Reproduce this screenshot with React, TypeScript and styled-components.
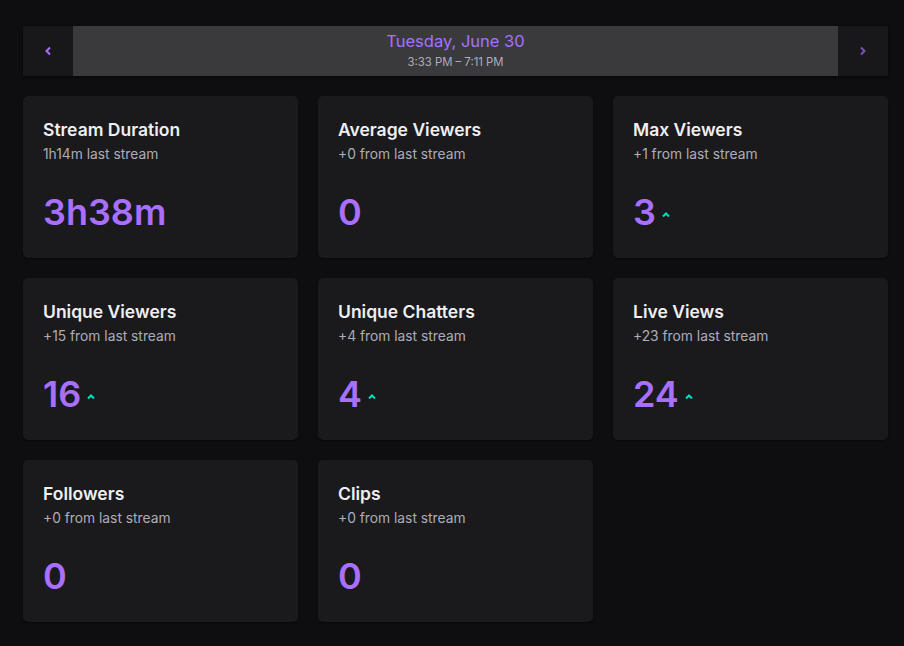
import styled, { createGlobalStyle } from 'styled-components'

const Global = createGlobalStyle`
  body {
    margin: 0;
    background: #0e0e10;
    font-family: Inter, "Noto Sans", sans-serif;
  }
`

const Page = styled.div`
  padding: 26px 16px 24px 23px;
  display: flex;
  flex-direction: column;
  gap: 20px;
`

const DateBar = styled.div`
  display: flex;
  height: 50px;
  width: 865px;
  box-shadow: 0 1px 3px rgba(0, 0, 0, 0.6);
`

const NavButton = styled.button<{ $dim?: boolean }>`
  width: 50px;
  border: none;
  background: #18181b;
  color: ${p => (p.$dim ? '#7a52bf' : '#a970ff')};
  display: flex;
  align-items: center;
  justify-content: center;
  padding: 0;
  cursor: pointer;
`

const DateCenter = styled.div`
  flex: 1;
  background: #3a3a3d;
  display: flex;
  flex-direction: column;
  align-items: center;
  justify-content: center;
  padding-bottom: 1px;
`

const DateTitle = styled.div`
  color: #a970ff;
  font-size: 16.5px;
  line-height: 20px;
`

const DateRange = styled.div`
  color: #adadb8;
  font-size: 11.3px;
  line-height: 16px;
  margin-top: 3px;
`

const Grid = styled.div`
  display: grid;
  grid-template-columns: repeat(3, 275px);
  grid-auto-rows: 162px;
  gap: 20px;
`

const Card = styled.div`
  background: #1a1a1d;
  border-radius: 5px;
  padding: 20px;
  box-sizing: border-box;
  box-shadow: 0 1px 2px rgba(0, 0, 0, 0.5);
`

const Title = styled.div`
  color: #efeff1;
  font-size: 17.5px;
  font-weight: 600;
  line-height: 24px;
  margin-top: 2px;
`

const Sub = styled.div`
  color: #adadb8;
  font-size: 13.8px;
  line-height: 20px;
  margin-top: 2px;
`

const ValueRow = styled.div`
  display: flex;
  align-items: center;
  gap: 6px;
  margin-top: 26px;
`

const Value = styled.div`
  color: #a970ff;
  font-size: 36px;
  font-weight: 600;
  line-height: 44px;
`

const Up = styled.svg`
  color: #00e0c0;
  margin-top: 4px;
`

const Chevron = ({ dir }: { dir: 'left' | 'right' }) => (
  <svg width="8" height="10" viewBox="0 0 8 10">
    <polyline
      points={dir === 'left' ? '6,1.5 2.5,5 6,8.5' : '2,1.5 5.5,5 2,8.5'}
      fill="none"
      stroke="currentColor"
      strokeWidth="2"
    />
  </svg>
)

const stats = [
  { title: 'Stream Duration', sub: '1h14m last stream', value: '3h38m', up: false },
  { title: 'Average Viewers', sub: '+0 from last stream', value: '0', up: false },
  { title: 'Max Viewers', sub: '+1 from last stream', value: '3', up: true },
  { title: 'Unique Viewers', sub: '+15 from last stream', value: '16', up: true },
  { title: 'Unique Chatters', sub: '+4 from last stream', value: '4', up: true },
  { title: 'Live Views', sub: '+23 from last stream', value: '24', up: true },
  { title: 'Followers', sub: '+0 from last stream', value: '0', up: false },
  { title: 'Clips', sub: '+0 from last stream', value: '0', up: false },
]

export default function App() {
  return (
    <>
      <Global />
      <Page>
        <DateBar>
          <NavButton>
            <Chevron dir="left" />
          </NavButton>
          <DateCenter>
            <DateTitle>Tuesday, June 30</DateTitle>
            <DateRange>3:33 PM – 7:11 PM</DateRange>
          </DateCenter>
          <NavButton $dim>
            <Chevron dir="right" />
          </NavButton>
        </DateBar>
        <Grid>
          {stats.map(s => (
            <Card key={s.title}>
              <Title>{s.title}</Title>
              <Sub>{s.sub}</Sub>
              <ValueRow>
                <Value>{s.value}</Value>
                {s.up && (
                  <Up width="8" height="5" viewBox="0 0 8 5">
                    <polyline points="1,4.5 4,1.5 7,4.5" fill="none" stroke="currentColor" strokeWidth="2" />
                  </Up>
                )}
              </ValueRow>
            </Card>
          ))}
        </Grid>
      </Page>
    </>
  )
}
